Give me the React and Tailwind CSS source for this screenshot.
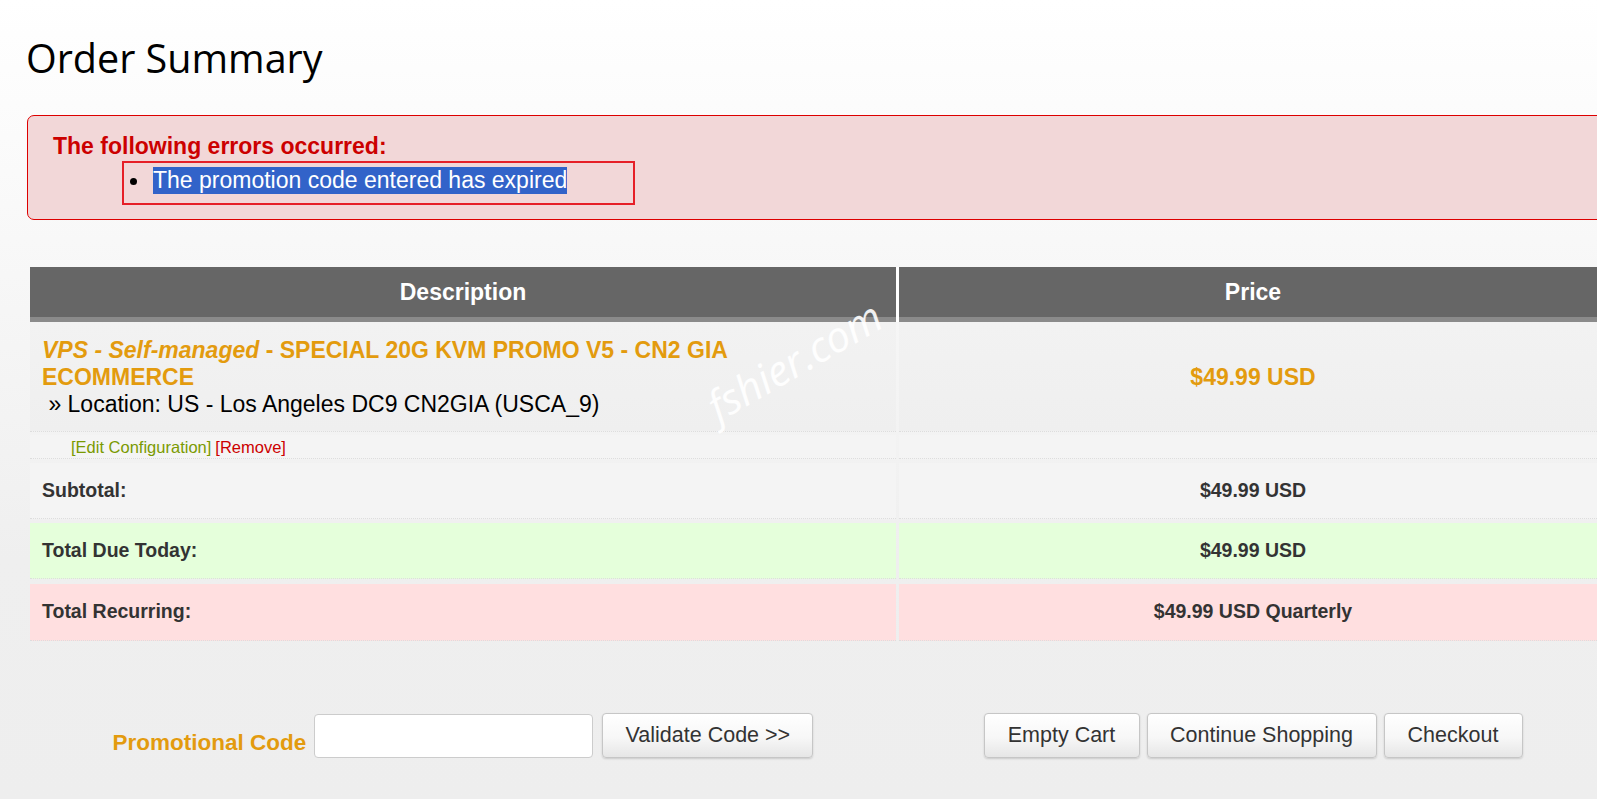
import React from "react";

const btn =
  "h-[45px] rounded-[4px] border border-[#c6c6c6] bg-[linear-gradient(to_bottom,#ffffff_0%,#f7f7f7_55%,#e6e6e6_100%)] shadow-[0_1px_2px_rgba(0,0,0,0.15)] text-[21.5px] text-[#333] flex items-center justify-center";

export default function App() {
  return (
    <div
      className="relative w-[1597px] h-[799px] overflow-hidden bg-[linear-gradient(to_bottom,#ffffff_0%,#f8f8f8_30%,#efefef_70%,#eeeeee_100%)]"
      style={{ fontFamily: '"Liberation Sans", Arial, sans-serif' }}
    >
      <h1
        className="pl-[26px] pt-[39px] h-[77px] text-[39.5px] leading-[38px] text-black"
        style={{ fontFamily: '"Open Sans", "Noto Sans", sans-serif' }}
      >
        Order Summary
      </h1>

      <div className="ml-[27px] mt-[38px] w-[1620px] h-[105px] rounded-[7px] border border-[#dd0000] bg-[#f2d7d8] pt-[17px] pl-[25px]">
        <div className="text-[23px] font-bold text-[#cc0000] leading-[26.5px]">
          The following errors occurred:
        </div>
        <div className="ml-[69px] mt-[1px] w-[513px] h-[44px] border-2 border-[#e61f28] flex items-start pt-[4px] pl-[6px]">
          <span className="mt-[11px] w-[7px] h-[7px] rounded-full bg-black shrink-0" />
          <span className="ml-[16px] text-[23px] leading-[27px] bg-[#3263c9] text-white whitespace-nowrap">
            The promotion code entered has expired
          </span>
        </div>
      </div>

      <div className="ml-[30px] mt-[47px] w-[1577px]">
        {/* header */}
        <div className="flex gap-[3px] bg-white">
          <div className="w-[866px] h-[55px] bg-[#666666] border-b-[5px] border-[#8a8a8a] flex items-center justify-center text-white font-bold text-[23px]">
            Description
          </div>
          <div className="w-[708px] h-[55px] bg-[#666666] border-b-[5px] border-[#8a8a8a] flex items-center justify-center text-white font-bold text-[23px]">
            Price
          </div>
        </div>

        {/* product row */}
        <div className="flex gap-[3px]">
          <div className="w-[866px] h-[110px] bg-[linear-gradient(to_bottom,#f2f2f2,#efefef)] border-b border-dotted border-[#dddddd] pl-[12px] pt-[15px] text-[23px] leading-[27px]">
            <div className="font-bold text-[#e39b0e] pr-[150px]">
              <em>VPS - Self-managed</em> - SPECIAL 20G KVM PROMO V5 - CN2 GIA ECOMMERCE
            </div>
            <div className="text-black leading-[26px]">&nbsp;» Location: US - Los Angeles DC9 CN2GIA (USCA_9)</div>
          </div>
          <div className="w-[708px] h-[110px] bg-[linear-gradient(to_bottom,#f2f2f2,#efefef)] border-b border-dotted border-[#dddddd] flex items-center justify-center pt-[2px] font-bold text-[23px] text-[#e39b0e]">
            $49.99 USD
          </div>
        </div>

        {/* edit row */}
        <div className="flex gap-[3px] mt-[3px]">
          <div className="w-[866px] h-[24px] bg-[#f4f4f4] border-b border-dotted border-[#dddddd] pl-[41px] flex items-center text-[16.5px] leading-[18px]">
            <span className="text-[#7a9a01]">[Edit Configuration]</span>
            <span className="ml-[4px] text-[#cc0000]">[Remove]</span>
          </div>
          <div className="w-[708px] h-[24px] bg-[#f4f4f4] border-b border-dotted border-[#dddddd]" />
        </div>

        {/* subtotal */}
        <div className="flex gap-[3px] mt-[4px] text-[19.5px] font-bold text-[#333]">
          <div className="w-[866px] h-[56px] bg-[#f4f4f4] border-b border-dotted border-[#dddddd] pl-[12px] flex items-center">
            Subtotal:
          </div>
          <div className="w-[708px] h-[56px] bg-[#f4f4f4] border-b border-dotted border-[#dddddd] flex items-center justify-center">
            $49.99 USD
          </div>
        </div>

        {/* total due */}
        <div className="flex gap-[3px] mt-[4px] text-[19.5px] font-bold text-[#333]">
          <div className="w-[866px] h-[56px] bg-[#e5ffdb] border-b border-dotted border-[#dddddd] pl-[12px] flex items-center">
            Total Due Today:
          </div>
          <div className="w-[708px] h-[56px] bg-[#e5ffdb] border-b border-dotted border-[#dddddd] flex items-center justify-center">
            $49.99 USD
          </div>
        </div>

        {/* recurring */}
        <div className="flex gap-[3px] mt-[5px] text-[19.5px] font-bold text-[#333]">
          <div className="w-[866px] h-[57px] bg-[#ffdfe0] border-b border-dotted border-[#dddddd] pl-[12px] flex items-center">
            Total Recurring:
          </div>
          <div className="w-[708px] h-[57px] bg-[#ffdfe0] border-b border-dotted border-[#dddddd] flex items-center justify-center">
            $49.99 USD Quarterly
          </div>
        </div>

        {/* bottom actions */}
        <div className="flex gap-[3px] mt-[72px]">
          <div className="w-[866px] flex items-end justify-center">
            <span className="mb-[2px] mr-[8px] text-[22.5px] font-bold text-[#e39b0e] leading-[26px]">
              Promotional Code
            </span>
            <input
              type="text"
              className="w-[279px] h-[44px] rounded-[4px] border border-[#cccccc] bg-white"
            />
            <button className={btn + " w-[211px] ml-[9px]"}>Validate Code &gt;&gt;</button>
          </div>
          <div className="w-[708px] flex items-end justify-center gap-[7px]">
            <button className={btn + " w-[156px]"}>Empty Cart</button>
            <button className={btn + " w-[230px]"}>Continue Shopping</button>
            <button className={btn + " w-[139px]"}>Checkout</button>
          </div>
        </div>
      </div>

      {/* watermark */}
      <div
        className="absolute left-[794px] top-[360px] -translate-x-1/2 -translate-y-1/2 -rotate-[30deg] text-[42px] italic text-white/90 whitespace-nowrap pointer-events-none"
        style={{ fontFamily: '"Open Sans", "Noto Sans", sans-serif' }}
      >
        fshier.com
      </div>
    </div>
  );
}
